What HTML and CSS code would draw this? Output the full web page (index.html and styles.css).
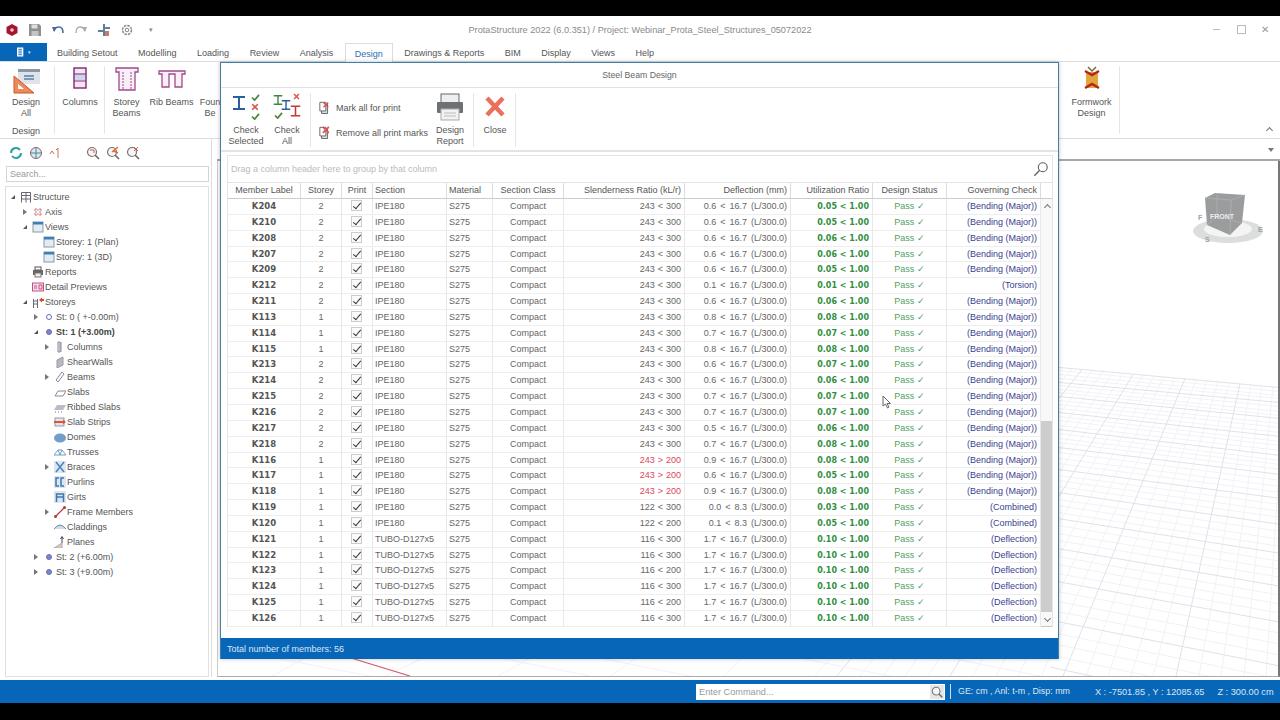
FILE: index.html
```html
<!DOCTYPE html>
<html lang="en">
<head>
    <meta charset="UTF-8">
    <title>ProtaStructure 2022</title>
    <link rel="stylesheet" href="styles.css">
</head>
<body>
<svg class="sprite">
    <symbol id="i-grid" viewBox="0 0 12 12"><path d="M1.500 1.500h9v3h-9zM1.500 4.500v7M6 1.500v10M10.500 4.500v7M1.500 8h9" fill="none" stroke="#667"/></symbol>
    <symbol id="i-axis" viewBox="0 0 12 12"><path d="M2 4h8M2 8h8M4 2v8M8 2v8" fill="none" stroke="#c77" stroke-dasharray="2 1"/></symbol>
    <symbol id="i-view" viewBox="0 0 12 12"><rect x="1" y="1" width="10" height="10" fill="#e4ebf3" stroke="#89a"/><rect x="1" y="1" width="10" height="2.500" fill="#3b7fb8"/></symbol>
    <symbol id="i-print" viewBox="0 0 12 12"><rect x="3" y="1" width="6" height="3" fill="#fff" stroke="#555"/><rect x="1" y="4" width="10" height="5" fill="#666"/><rect x="3" y="7" width="6" height="4" fill="#eee" stroke="#777"/></symbol>
    <symbol id="i-detail" viewBox="0 0 12 12"><rect x="0.500" y="2" width="11" height="8" fill="#f7dce8" stroke="#c2528a"/><path d="M2 5h3M2 7h3M7 4h3v4H7z" fill="none" stroke="#c2528a"/></symbol>
    <symbol id="i-storeys" viewBox="0 0 12 12"><path d="M1.500 3v9M5.500 3v9M1.500 5h4M1.500 8h4" fill="none" stroke="#667"/><path d="M7 4l3-2.500v1.500h2v2h-2v1.500z" fill="#d9492e"/></symbol>
    <symbol id="i-column" viewBox="0 0 12 12"><path d="M4 1h2v10H4zM7 1v10" fill="#eee" stroke="#889"/></symbol>
    <symbol id="i-wall" viewBox="0 0 12 12"><path d="M3 4l6-3v8l-6 3z" fill="#b6b9c2" stroke="#99a"/></symbol>
    <symbol id="i-beam" viewBox="0 0 12 12"><path d="M2 9l6-8 2 2-6 8z" fill="#fff" stroke="#889"/></symbol>
    <symbol id="i-slab" viewBox="0 0 12 12"><path d="M1 10l3-5h8l-3 5z" fill="#fff" stroke="#889"/></symbol>
    <symbol id="i-ribbed" viewBox="0 0 12 12"><path d="M0 9l3-5h9l-3 5z" fill="#b9bcc4"/><path d="M1 11h1M4 11h1M7 11h1" stroke="#778"/></symbol>
    <symbol id="i-strip" viewBox="0 0 12 12"><rect x="1" y="2" width="9" height="8" fill="#dfe4ef" stroke="#99a"/><path d="M0 6h10" stroke="#e2562f" stroke-width="2"/><path d="M9 3.500l3 2.500-3 2.500z" fill="#e2562f"/></symbol>
    <symbol id="i-dome" viewBox="0 0 12 12"><ellipse cx="6" cy="7" rx="6" ry="4.500" fill="#6f9fc8"/></symbol>
    <symbol id="i-truss" viewBox="0 0 12 12"><path d="M0 9h12L8 4H4zM4 4l2 5 2-5" fill="none" stroke="#6f9fc8"/></symbol>
    <symbol id="i-brace" viewBox="0 0 12 12"><rect width="12" height="12" fill="#dbe6f2"/><path d="M2 1l8 10M10 1L2 11" stroke="#4a83b8" stroke-width="1.500"/></symbol>
    <symbol id="i-purlin" viewBox="0 0 12 12"><rect width="12" height="12" fill="#dbe6f2"/><path d="M5 2H2v8h3M10 2H7v8h3" fill="none" stroke="#3f78ad" stroke-width="1.500"/></symbol>
    <symbol id="i-girt" viewBox="0 0 12 12"><rect width="12" height="12" fill="#dbe6f2"/><path d="M2.500 11V3h7v8M2.500 6h7" fill="none" stroke="#3f78ad" stroke-width="1.500"/></symbol>
    <symbol id="i-frame" viewBox="0 0 12 12"><path d="M1.500 10.500l9-9" stroke="#b8323f" stroke-width="1.200"/><circle cx="1.500" cy="10.500" r="1.500" fill="#b8323f"/><circle cx="10.500" cy="1.500" r="1.500" fill="#b8323f"/></symbol>
    <symbol id="i-clad" viewBox="0 0 12 12"><path d="M0 8q6-8 12 0" fill="#cfdbe6" stroke="#6f8fae"/></symbol>
    <symbol id="i-plane" viewBox="0 0 12 12"><path d="M0 12l8-5v5z" fill="#e8c9bb" stroke="#aaa"/><path d="M8 7V1M6.500 3L8 .5 9.500 3" fill="none" stroke="#445"/></symbol>
    <symbol id="i-ibeam" viewBox="0 0 14 16"><path d="M1 1h12v2H8v10h5v2H1v-2h5V3H1z"/></symbol>
    <symbol id="i-tick" viewBox="0 0 10 8"><path d="M1 4l3 3 5-6" fill="none" stroke="#4f8a3c" stroke-width="2"/></symbol>
    <symbol id="i-cross" viewBox="0 0 10 10"><path d="M1.500 1.500l7 7M8.500 1.500l-7 7" fill="none" stroke="#d9534f" stroke-width="2"/></symbol>
    <symbol id="i-doc" viewBox="0 0 14 16"><path d="M3 4h7v11H3z" fill="#ddd" stroke="#555"/><path d="M1 2h7v10H1z" fill="#fff" stroke="#555"/></symbol>
    <symbol id="i-zoom" viewBox="0 0 14 14"><circle cx="6" cy="6" r="4.500" fill="#f6f6f6" stroke="#777" stroke-width="1.200"/><path d="M9 9l4 4" stroke="#666" stroke-width="1.600"/></symbol>
</svg>

<div class="app">
    <div class="titlebar">
        <div class="quick">
            <svg class="q-icon" viewBox="0 0 14 14"><path d="M7 1l5.500 3v6L7 13l-5.500-3V4z" fill="#a3162f"/><circle cx="7" cy="7" r="1.800" fill="#f3c7cf"/></svg>
            <svg class="q-icon" viewBox="0 0 14 14"><path d="M1 1h10l2 2v10H1z" fill="#8f8f8f"/><rect x="3.500" y="1.500" width="6" height="4" fill="#ddd"/><rect x="3.500" y="8" width="7" height="5" fill="#c4c4c4"/></svg>
            <svg class="q-icon" viewBox="0 0 14 14"><path d="M3 8q1-4 5-4t4 6" fill="none" stroke="#456e9c" stroke-width="1.600"/><path d="M1 4l5 0-3 5z" fill="#456e9c"/></svg>
            <svg class="q-icon" viewBox="0 0 14 14"><path d="M11 8q-1-4-5-4t-4 6" fill="none" stroke="#aaa" stroke-width="1.300"/><path d="M13 4H8l3 5z" fill="#aaa"/></svg>
            <svg class="q-icon" viewBox="0 0 14 14"><path d="M6 1h2v3h5v2H8v7H6V9H1V7h5z" fill="#5d7f9c"/><path d="M8 8h4v5H8z" fill="#c87a6b"/></svg>
            <svg class="q-icon" viewBox="0 0 14 14"><circle cx="7" cy="7" r="4.500" fill="none" stroke="#888" stroke-width="1.500" stroke-dasharray="2.500 1"/><circle cx="7" cy="7" r="1.800" fill="none" stroke="#888"/></svg>
            <span class="q-more">▾</span>
        </div>
        <div class="app-title">ProtaStructure 2022 (6.0.351) / Project: Webinar_Prota_Steel_Structures_05072022</div>
        <div class="win-btns">
            <span class="win-min"></span>
            <span class="win-max"></span>
            <span class="win-close">✕</span>
        </div>
    </div>

    <div class="tabs">
        <div class="file-tab">
            <svg viewBox="0 0 10 10" class="file-icon"><path d="M0 0h7v10H0z" fill="#fff"/><path d="M1.500 2h4M1.500 4h4M1.500 6h4M1.500 8h4" stroke="#0866b8"/></svg>
            <span class="file-caret">▾</span>
        </div>
        <span class="tab">Building Setout</span>
        <span class="tab">Modelling</span>
        <span class="tab">Loading</span>
        <span class="tab">Review</span>
        <span class="tab">Analysis</span>
        <span class="tab active">Design</span>
        <span class="tab">Drawings &amp; Reports</span>
        <span class="tab">BIM</span>
        <span class="tab">Display</span>
        <span class="tab">Views</span>
        <span class="tab">Help</span>
    </div>

    <div class="ribbon">
        <div class="r-group design-all">
            <svg class="r-icon" viewBox="0 0 28 28"><rect x="6" y="3" width="22" height="15" fill="#dfe2e6"/><rect x="6" y="3" width="22" height="3" fill="#8b97a3"/><path d="M12 10h10M12 13h10" stroke="#5b7fa6" stroke-width="1.500"/><path d="M2 10v17h20z" fill="#ee8a5a" stroke="#c9562a"/><path d="M6 18v5h6z" fill="#fff"/></svg>
            <span class="r-label">Design<br>All</span>
            <span class="r-caption">Design</span>
        </div>
        <div class="r-group columns">
            <svg class="r-icon" viewBox="0 0 28 28"><rect x="8" y="2" width="12" height="20" fill="#f1e6f2" stroke="#8a2f7f" stroke-width="1.500"/><rect x="9" y="7" width="10" height="7" fill="#cdd4ec"/><path d="M8 8h12M8 15h12" stroke="#8a2f7f"/></svg>
            <span class="r-label">Columns</span>
        </div>
        <div class="r-group storey">
            <svg class="r-icon" viewBox="0 0 28 28"><path d="M3 2h22v4h-3v18H6V6H3z" fill="#f7eef6" stroke="#a04a8c" stroke-width="1.300"/><path d="M10 6v18M18 6v18" stroke="#a04a8c" stroke-dasharray="2 1"/></svg>
            <span class="r-label">Storey<br>Beams</span>
        </div>
        <div class="r-group rib">
            <svg class="r-icon" viewBox="0 0 28 28"><path d="M1 5h26v3h-3v13h-7V8h-6v13H4V8H1z" fill="#f7eef6" stroke="#a04a8c" stroke-width="1.300"/></svg>
            <span class="r-label">Rib Beams</span>
        </div>
        <div class="r-group found">
            <span class="r-label">Foun<br>Be</span>
        </div>
        <div class="r-group formwork">
            <svg class="r-icon" viewBox="0 0 28 28"><path d="M8 6h12v16H8z" fill="#e2a63a"/><path d="M7 5l7 4 7-4M7 22l7-4 7 4" fill="none" stroke="#b3261e" stroke-width="2.500"/><path d="M10 1l4 4 4-4" fill="none" stroke="#7a6a3a" stroke-width="1.500"/></svg>
            <span class="r-label">Formwork<br>Design</span>
        </div>
        <span class="r-collapse"></span>
    </div>

    <div class="work">
        <aside class="side">
            <div class="side-tools">
                <svg class="t-icon" viewBox="0 0 14 14"><path d="M2 7a5 5 0 0 1 9-3M12 7a5 5 0 0 1-9 3" fill="none" stroke="#2ba1a8" stroke-width="2"/></svg>
                <svg class="t-icon" viewBox="0 0 14 14"><circle cx="7" cy="7" r="5.500" fill="#d7e8ee" stroke="#a05b6f"/><path d="M1.500 7h11M7 1.500v11" stroke="#4a8a9c"/></svg>
                <svg class="t-icon" viewBox="0 0 14 14"><path d="M1 8l2-3 2 3M9 2v10M7 4l2-2" fill="none" stroke="#c9725a"/></svg>
                <span class="t-gap"></span>
                <svg class="t-icon" viewBox="0 0 14 14"><use href="#i-zoom"/><path d="M4 4h4v3" fill="none" stroke="#d9534f"/></svg>
                <svg class="t-icon" viewBox="0 0 14 14"><use href="#i-zoom"/><path d="M6 6l6-5M8 5l4 2" fill="none" stroke="#e2682f" stroke-width="1.500"/></svg>
                <svg class="t-icon" viewBox="0 0 14 14"><use href="#i-zoom"/><path d="M8 1l4 4M12 1L8 5" fill="none" stroke="#d9534f"/></svg>
            </div>
            <div class="search">Search...</div>
            <div class="tree">
                <div class="node l0"><i class="caret open"></i><svg class="ico"><use href="#i-grid"/></svg>Structure</div>
                <div class="node l1"><i class="caret"></i><svg class="ico"><use href="#i-axis"/></svg>Axis</div>
                <div class="node l1"><i class="caret open"></i><svg class="ico"><use href="#i-view"/></svg>Views</div>
                <div class="node l2"><i></i><svg class="ico"><use href="#i-view"/></svg>Storey: 1 (Plan)</div>
                <div class="node l2"><i></i><svg class="ico"><use href="#i-view"/></svg>Storey: 1 (3D)</div>
                <div class="node l1"><i></i><svg class="ico"><use href="#i-print"/></svg>Reports</div>
                <div class="node l1"><i></i><svg class="ico"><use href="#i-detail"/></svg>Detail Previews</div>
                <div class="node l1"><i class="caret open"></i><svg class="ico"><use href="#i-storeys"/></svg>Storeys</div>
                <div class="node l2"><i class="caret"></i><b class="dot hollow"></b>St: 0 ( +-0.00m)</div>
                <div class="node l2 bold"><i class="caret open"></i><b class="dot"></b>St: 1 (+3.00m)</div>
                <div class="node l3"><i class="caret"></i><svg class="ico"><use href="#i-column"/></svg>Columns</div>
                <div class="node l3"><i></i><svg class="ico"><use href="#i-wall"/></svg>ShearWalls</div>
                <div class="node l3"><i class="caret"></i><svg class="ico"><use href="#i-beam"/></svg>Beams</div>
                <div class="node l3"><i></i><svg class="ico"><use href="#i-slab"/></svg>Slabs</div>
                <div class="node l3"><i></i><svg class="ico"><use href="#i-ribbed"/></svg>Ribbed Slabs</div>
                <div class="node l3"><i></i><svg class="ico"><use href="#i-strip"/></svg>Slab Strips</div>
                <div class="node l3"><i></i><svg class="ico"><use href="#i-dome"/></svg>Domes</div>
                <div class="node l3"><i></i><svg class="ico"><use href="#i-truss"/></svg>Trusses</div>
                <div class="node l3"><i class="caret"></i><svg class="ico"><use href="#i-brace"/></svg>Braces</div>
                <div class="node l3"><i></i><svg class="ico"><use href="#i-purlin"/></svg>Purlins</div>
                <div class="node l3"><i></i><svg class="ico"><use href="#i-girt"/></svg>Girts</div>
                <div class="node l3"><i class="caret"></i><svg class="ico"><use href="#i-frame"/></svg>Frame Members</div>
                <div class="node l3"><i></i><svg class="ico"><use href="#i-clad"/></svg>Claddings</div>
                <div class="node l3"><i></i><svg class="ico"><use href="#i-plane"/></svg>Planes</div>
                <div class="node l2"><i class="caret"></i><b class="dot"></b>St: 2 (+6.00m)</div>
                <div class="node l2"><i class="caret"></i><b class="dot"></b>St: 3 (+9.00m)</div>
            </div>
        </aside>
        <main class="view">
            <div class="view-strip"><span class="view-arrow"></span></div>
            <div class="canvas">
                <!-- viewBox uses screen coordinates so the floor lines are easy to read off -->
                <svg class="floor" viewBox="218 161 1060 516" preserveAspectRatio="none">
                    <path class="floor-minor" d="M1050 370L1280 392M1050 374L1280 396M1050 378L1280 399M1050 385L1280 407M1050 389L1280 412M1050 392L1280 416M1050 400L1280 424M1050 404L1280 428M1050 408L1280 433M1050 416L1280 442M1050 420L1280 446M1050 425L1280 451M1050 433L1280 461M1050 438L1280 465M1050 442L1280 470M1050 452L1280 481M1050 458L1280 487M1050 463L1280 493M1050 475L1280 505M1050 480L1280 512M1050 486L1280 518M1050 499L1280 532M1050 505L1280 540M1050 512L1280 547M1050 525L1280 562M1050 533L1280 570M1050 540L1280 578M1050 556L1280 596M1050 564L1280 605M1050 573L1280 614M1050 591L1280 634M1050 601L1280 645M1050 611L1280 656M1050 633L1280 680M1050 644L1280 692M1050 656L1280 705"/>
                    <path class="floor-minor" d="M1072 369L815 677M1092 371L860 677M1103 372L883 677M1113 373L905 677M1123 374L928 677M1143 375L973 677M1154 376L996 677M1164 377L1018 677M1175 378L1041 677M1196 380L1086 677M1207 381L1108 677M1218 382L1131 677M1229 383L1153 677M1251 385L1199 677M1262 386L1221 677M1273 387L1244 677M1284 388L1266 677"/>
                    <path class="floor-major" d="M1050 367L1280 388M1050 382L1280 403M1050 396L1280 419M1050 412L1280 437M1050 429L1280 456M1050 447L1280 475M1050 469L1280 499M1050 492L1280 525M1050 518L1280 554M1050 548L1280 587M1050 581L1280 623M1050 621L1280 667M1050 668L1280 718"/>
                    <path class="floor-major" d="M1082 370L837 677M1133 375L950 677M1185 379L1063 677M1240 384L1176 677M1295 389L1289 677"/>
                    <path class="floor-minor" d="M742 659L724 677M636 659L611 677M530 659L498 677M423 659L385 677M305 659L272 677M500 659L590 677M280 660L370 677M600 659L690 677M800 659L890 677M950 659L1040 677"/>
                    <path class="floor-red" d="M351 659L410 677"/>
                </svg>
                <svg class="cube" viewBox="1190 185 80 60">
                    <ellipse cx="1228" cy="231" rx="35" ry="12" fill="#dcdddd"/>
                    <ellipse cx="1228" cy="229" rx="24" ry="8" fill="#f4f4f4"/>
                    <path d="M1205 198l10-5 30 2-3 28-12 12-23-10z" fill="#9a9c9e"/>
                    <path d="M1205 198l26 2 14-5M1231 200l-1 35M1207 225l10-9 25 7M1217 193l0 23" fill="none" stroke="#b4b5b6" stroke-width="0.700"/>
                    <text x="1210" y="219" class="cube-front">FRONT</text>
                    <text x="1198" y="220" class="cube-side">F</text>
                    <text x="1258" y="232" class="cube-side">E</text>
                    <text x="1205" y="242" class="cube-side">S</text>
                </svg>
            </div>
        </main>
    </div>

    <div class="statusbar">
        <div class="command"><span>Enter Command...</span><svg viewBox="0 0 14 14"><use href="#i-zoom"/></svg></div>
        <span class="units">GE: cm , Anl: t-m , Disp: mm</span>
        <span class="coords">X : -7501.85 , Y : 12085.65</span>
        <span class="zval">Z : 300.00 cm</span>
    </div>

    <section class="dialog">
        <div class="dlg-title">Steel Beam Design</div>
        <div class="dlg-tools">
            <div class="d-btn check-sel">
                <svg class="d-icon" viewBox="0 0 30 28"><use href="#i-ibeam" x="1" y="2" width="14" height="16" fill="#2c5f9e"/><use href="#i-tick" x="20" y="1" width="9" height="7"/><use href="#i-cross" x="20" y="10" width="8" height="8"/><use href="#i-tick" x="20" y="20" width="9" height="7"/></svg>
                <span>Check<br>Selected</span>
            </div>
            <div class="d-btn check-all">
                <svg class="d-icon" viewBox="0 0 30 28"><use href="#i-ibeam" x="1" y="1" width="10" height="12" fill="#3a8a4a"/><use href="#i-ibeam" x="9" y="6" width="10" height="12" fill="#2c5f9e"/><use href="#i-ibeam" x="18" y="11" width="11" height="14" fill="#c1392f"/><use href="#i-cross" x="21" y="0" width="7" height="7"/><use href="#i-tick" x="2" y="19" width="9" height="7"/></svg>
                <span>Check<br>All</span>
            </div>
            <div class="d-sep"></div>
            <div class="d-marks">
                <div class="d-mark"><svg viewBox="0 0 14 16"><use href="#i-doc"/><use href="#i-cross" x="4" y="1" width="8" height="8"/></svg>Mark all for print</div>
                <div class="d-mark"><svg viewBox="0 0 14 16"><use href="#i-doc"/><use href="#i-cross" x="3" y="0" width="10" height="10"/></svg>Remove all print marks</div>
            </div>
            <div class="d-btn report">
                <svg class="d-icon" viewBox="0 0 30 28"><rect x="6" y="1" width="18" height="9" fill="#eee" stroke="#666"/><rect x="2" y="9" width="26" height="11" rx="1" fill="#6d7174"/><rect x="6" y="16" width="18" height="11" fill="#f2f2f2" stroke="#aaa"/><path d="M9 20h12M9 23h12" stroke="#bbb"/></svg>
                <span>Design<br>Report</span>
            </div>
            <div class="d-sep"></div>
            <div class="d-btn close">
                <svg class="d-icon" viewBox="0 0 30 28"><path d="M7 5l16 17M23 5L7 22" stroke="#ec6f5d" stroke-width="4.500"/></svg>
                <span>Close</span>
            </div>
            <div class="d-sep"></div>
        </div>

        <div class="gridbox">
            <div class="grouppanel">
                <span>Drag a column header here to group by that column</span>
                <svg viewBox="0 0 18 18"><circle cx="11" cy="7" r="5" fill="none" stroke="#666" stroke-width="1.300"/><path d="M7.500 10.500L1.500 16.500" stroke="#666" stroke-width="1.600"/></svg>
            </div>
            <div class="gridhead">
                <span>Member Label</span><span>Storey</span><span>Print</span><span>Section</span><span>Material</span><span>Section Class</span><span>Slenderness Ratio (kL/r)</span><span>Deflection (mm)</span><span>Utilization Ratio</span><span>Design Status</span><span>Governing Check</span>
            </div>
            <div class="gridbody">
                <div class="rows">
                    <div class="row"><span>K204</span><span>2</span><span><i class="check"></i></span><span>IPE180</span><span>S275</span><span>Compact</span><span>243 &lt; 300</span><span>0.6 &lt; 16.7 (L/300.0)</span><span>0.05 &lt; 1.00</span><span>Pass ✓</span><span>(Bending (Major))</span></div>
                    <div class="row"><span>K210</span><span>2</span><span><i class="check"></i></span><span>IPE180</span><span>S275</span><span>Compact</span><span>243 &lt; 300</span><span>0.6 &lt; 16.7 (L/300.0)</span><span>0.05 &lt; 1.00</span><span>Pass ✓</span><span>(Bending (Major))</span></div>
                    <div class="row"><span>K208</span><span>2</span><span><i class="check"></i></span><span>IPE180</span><span>S275</span><span>Compact</span><span>243 &lt; 300</span><span>0.6 &lt; 16.7 (L/300.0)</span><span>0.06 &lt; 1.00</span><span>Pass ✓</span><span>(Bending (Major))</span></div>
                    <div class="row"><span>K207</span><span>2</span><span><i class="check"></i></span><span>IPE180</span><span>S275</span><span>Compact</span><span>243 &lt; 300</span><span>0.6 &lt; 16.7 (L/300.0)</span><span>0.06 &lt; 1.00</span><span>Pass ✓</span><span>(Bending (Major))</span></div>
                    <div class="row"><span>K209</span><span>2</span><span><i class="check"></i></span><span>IPE180</span><span>S275</span><span>Compact</span><span>243 &lt; 300</span><span>0.6 &lt; 16.7 (L/300.0)</span><span>0.05 &lt; 1.00</span><span>Pass ✓</span><span>(Bending (Major))</span></div>
                    <div class="row"><span>K212</span><span>2</span><span><i class="check"></i></span><span>IPE180</span><span>S275</span><span>Compact</span><span>243 &lt; 300</span><span>0.1 &lt; 16.7 (L/300.0)</span><span>0.01 &lt; 1.00</span><span>Pass ✓</span><span>(Torsion)</span></div>
                    <div class="row"><span>K211</span><span>2</span><span><i class="check"></i></span><span>IPE180</span><span>S275</span><span>Compact</span><span>243 &lt; 300</span><span>0.6 &lt; 16.7 (L/300.0)</span><span>0.06 &lt; 1.00</span><span>Pass ✓</span><span>(Bending (Major))</span></div>
                    <div class="row"><span>K113</span><span>1</span><span><i class="check"></i></span><span>IPE180</span><span>S275</span><span>Compact</span><span>243 &lt; 300</span><span>0.8 &lt; 16.7 (L/300.0)</span><span>0.08 &lt; 1.00</span><span>Pass ✓</span><span>(Bending (Major))</span></div>
                    <div class="row"><span>K114</span><span>1</span><span><i class="check"></i></span><span>IPE180</span><span>S275</span><span>Compact</span><span>243 &lt; 300</span><span>0.7 &lt; 16.7 (L/300.0)</span><span>0.07 &lt; 1.00</span><span>Pass ✓</span><span>(Bending (Major))</span></div>
                    <div class="row"><span>K115</span><span>1</span><span><i class="check"></i></span><span>IPE180</span><span>S275</span><span>Compact</span><span>243 &lt; 300</span><span>0.8 &lt; 16.7 (L/300.0)</span><span>0.08 &lt; 1.00</span><span>Pass ✓</span><span>(Bending (Major))</span></div>
                    <div class="row"><span>K213</span><span>2</span><span><i class="check"></i></span><span>IPE180</span><span>S275</span><span>Compact</span><span>243 &lt; 300</span><span>0.6 &lt; 16.7 (L/300.0)</span><span>0.07 &lt; 1.00</span><span>Pass ✓</span><span>(Bending (Major))</span></div>
                    <div class="row"><span>K214</span><span>2</span><span><i class="check"></i></span><span>IPE180</span><span>S275</span><span>Compact</span><span>243 &lt; 300</span><span>0.6 &lt; 16.7 (L/300.0)</span><span>0.06 &lt; 1.00</span><span>Pass ✓</span><span>(Bending (Major))</span></div>
                    <div class="row"><span>K215</span><span>2</span><span><i class="check"></i></span><span>IPE180</span><span>S275</span><span>Compact</span><span>243 &lt; 300</span><span>0.7 &lt; 16.7 (L/300.0)</span><span>0.07 &lt; 1.00</span><span>Pass ✓</span><span>(Bending (Major))</span></div>
                    <div class="row"><span>K216</span><span>2</span><span><i class="check"></i></span><span>IPE180</span><span>S275</span><span>Compact</span><span>243 &lt; 300</span><span>0.7 &lt; 16.7 (L/300.0)</span><span>0.07 &lt; 1.00</span><span>Pass ✓</span><span>(Bending (Major))</span></div>
                    <div class="row"><span>K217</span><span>2</span><span><i class="check"></i></span><span>IPE180</span><span>S275</span><span>Compact</span><span>243 &lt; 300</span><span>0.5 &lt; 16.7 (L/300.0)</span><span>0.06 &lt; 1.00</span><span>Pass ✓</span><span>(Bending (Major))</span></div>
                    <div class="row"><span>K218</span><span>2</span><span><i class="check"></i></span><span>IPE180</span><span>S275</span><span>Compact</span><span>243 &lt; 300</span><span>0.7 &lt; 16.7 (L/300.0)</span><span>0.08 &lt; 1.00</span><span>Pass ✓</span><span>(Bending (Major))</span></div>
                    <div class="row"><span>K116</span><span>1</span><span><i class="check"></i></span><span>IPE180</span><span>S275</span><span>Compact</span><span class="fail">243 &gt; 200</span><span>0.9 &lt; 16.7 (L/300.0)</span><span>0.08 &lt; 1.00</span><span>Pass ✓</span><span>(Bending (Major))</span></div>
                    <div class="row"><span>K117</span><span>1</span><span><i class="check"></i></span><span>IPE180</span><span>S275</span><span>Compact</span><span class="fail">243 &gt; 200</span><span>0.6 &lt; 16.7 (L/300.0)</span><span>0.05 &lt; 1.00</span><span>Pass ✓</span><span>(Bending (Major))</span></div>
                    <div class="row"><span>K118</span><span>1</span><span><i class="check"></i></span><span>IPE180</span><span>S275</span><span>Compact</span><span class="fail">243 &gt; 200</span><span>0.9 &lt; 16.7 (L/300.0)</span><span>0.08 &lt; 1.00</span><span>Pass ✓</span><span>(Bending (Major))</span></div>
                    <div class="row"><span>K119</span><span>1</span><span><i class="check"></i></span><span>IPE180</span><span>S275</span><span>Compact</span><span>122 &lt; 300</span><span>0.0 &lt; 8.3 (L/300.0)</span><span>0.03 &lt; 1.00</span><span>Pass ✓</span><span>(Combined)</span></div>
                    <div class="row"><span>K120</span><span>1</span><span><i class="check"></i></span><span>IPE180</span><span>S275</span><span>Compact</span><span>122 &lt; 200</span><span>0.1 &lt; 8.3 (L/300.0)</span><span>0.05 &lt; 1.00</span><span>Pass ✓</span><span>(Combined)</span></div>
                    <div class="row"><span>K121</span><span>1</span><span><i class="check"></i></span><span>TUBO-D127x5</span><span>S275</span><span>Compact</span><span>116 &lt; 300</span><span>1.7 &lt; 16.7 (L/300.0)</span><span>0.10 &lt; 1.00</span><span>Pass ✓</span><span>(Deflection)</span></div>
                    <div class="row"><span>K122</span><span>1</span><span><i class="check"></i></span><span>TUBO-D127x5</span><span>S275</span><span>Compact</span><span>116 &lt; 300</span><span>1.7 &lt; 16.7 (L/300.0)</span><span>0.10 &lt; 1.00</span><span>Pass ✓</span><span>(Deflection)</span></div>
                    <div class="row"><span>K123</span><span>1</span><span><i class="check"></i></span><span>TUBO-D127x5</span><span>S275</span><span>Compact</span><span>116 &lt; 200</span><span>1.7 &lt; 16.7 (L/300.0)</span><span>0.10 &lt; 1.00</span><span>Pass ✓</span><span>(Deflection)</span></div>
                    <div class="row"><span>K124</span><span>1</span><span><i class="check"></i></span><span>TUBO-D127x5</span><span>S275</span><span>Compact</span><span>116 &lt; 300</span><span>1.7 &lt; 16.7 (L/300.0)</span><span>0.10 &lt; 1.00</span><span>Pass ✓</span><span>(Deflection)</span></div>
                    <div class="row"><span>K125</span><span>1</span><span><i class="check"></i></span><span>TUBO-D127x5</span><span>S275</span><span>Compact</span><span>116 &lt; 200</span><span>1.7 &lt; 16.7 (L/300.0)</span><span>0.10 &lt; 1.00</span><span>Pass ✓</span><span>(Deflection)</span></div>
                    <div class="row"><span>K126</span><span>1</span><span><i class="check"></i></span><span>TUBO-D127x5</span><span>S275</span><span>Compact</span><span>116 &lt; 300</span><span>1.7 &lt; 16.7 (L/300.0)</span><span>0.10 &lt; 1.00</span><span>Pass ✓</span><span>(Deflection)</span></div>
                </div>
                <div class="scroll">
                    <span class="scroll-up"></span>
                    <span class="scroll-thumb"></span>
                    <span class="scroll-down"></span>
                </div>
            </div>
        </div>

        <div class="dlg-foot">
            <span>Total number of members: 56</span>
            <i class="grip"></i>
        </div>
    </section>

    <svg class="pointer" viewBox="0 0 10 14"><path d="M1 1v10l2.500-2 2 4 1.500-1-2-3.500h3.500z" fill="#fff" stroke="#666"/></svg>
</div>
</body>
</html>
```

FILE: styles.css
```css
* {
    box-sizing: border-box;
}

html, body {
    margin: 0;
    padding: 0;
}

body {
    width: 1280px;
    height: 720px;
    overflow: hidden;
    background-color: #000;
    font-family: "Liberation Sans", Arial, sans-serif;
    font-size: 9px;
    color: #555;
}

.sprite {
    display: none;
}

.app {
    position: relative;
    display: flex;
    flex-direction: column;
    width: 1280px;
    height: 687px;
    margin-top: 16px;
    background-color: #fff;
}

/* title bar */
.titlebar {
    display: grid;
    grid-template-columns: 1fr auto 1fr;
    align-items: center;
    height: 27px;
    padding: 0 11px 0 5px;
}

.quick {
    display: flex;
    align-items: center;
    gap: 9px;
}

.q-icon {
    width: 14px;
    height: 14px;
}

.q-more {
    margin-left: 6px;
    font-size: 7px;
    color: #888;
}

.app-title {
    padding-left: 6px;
    text-align: center;
    font-size: 9.2px;
    color: #8a8a8a;
}

.win-btns {
    display: flex;
    justify-content: flex-end;
    align-items: center;
    gap: 15px;
    font-size: 10px;
    color: #aaa;
}

.win-min {
    width: 7px;
    height: 1px;
    margin-right: 2px;
    background-color: #bbb;
}

.win-max {
    width: 9px;
    height: 9px;
    border: 1px solid #bbb;
}

.win-close {
    color: #999;
}

/* tabs */
.tabs {
    display: flex;
    align-items: stretch;
    height: 19px;
    border-bottom: 1px solid #ddd;
}

.file-tab {
    display: flex;
    align-items: center;
    justify-content: center;
    gap: 2px;
    width: 47px;
    margin-right: 4px;
    background-color: #0866b8;
}

.file-icon {
    width: 9px;
    height: 10px;
}

.file-caret {
    font-size: 5px;
    color: #dce9f5;
}

.tab {
    display: flex;
    align-items: center;
    padding: 2px 6px 0;
    margin-right: 8.5px;
    font-size: 9px;
    color: #555;
}

.tab.active {
    margin: 0 5.5px -1px -3px;
    padding: 2px 9px 0;
    color: #2a6fb5;
    background-color: #fff;
    border: 1px solid #ddd;
    border-bottom: none;
}

/* ribbon */
.ribbon {
    position: relative;
    display: flex;
    height: 77px;
    border-bottom: 1px solid #ddd;
    padding-top: 4px;
}

.r-group {
    display: flex;
    flex-direction: column;
    align-items: center;
    flex: none;
    height: 68px;
    text-align: center;
    line-height: 11px;
    font-size: 9px;
    color: #555;
    white-space: nowrap;
}

.r-icon {
    flex: none;
    width: 28px;
    height: 28px;
    margin-bottom: 3px;
}

.r-caption {
    margin-top: 7px;
}

.design-all {
    width: 55px;
    padding-right: 2px;
    border-right: 1px solid #e6e6e6;
}

.columns {
    width: 50px;
    padding-left: 1px;
    border-right: 1px solid #e6e6e6;
}

.storey {
    width: 43px;
}

.rib {
    width: 47px;
}

.found {
    width: 30px;
    padding-top: 31px;
}

.formwork {
    width: 58px;
    margin-left: auto;
    margin-right: 160px;
    padding-left: 2px;
    border-right: 1px solid #e6e6e6;
}

.r-collapse {
    position: absolute;
    right: 8px;
    bottom: 5px;
    width: 5px;
    height: 5px;
    border-top: 1px solid #777;
    border-left: 1px solid #777;
    transform: rotate(45deg);
}

/* work area */
.work {
    display: flex;
    flex: 1;
    min-height: 0;
}

.side {
    display: flex;
    flex-direction: column;
    width: 212px;
    padding: 3px 2px 0 6px;
    border-right: 1px solid #ddd;
}

.side-tools {
    display: flex;
    align-items: center;
    gap: 6px;
    height: 21px;
    padding-left: 3px;
}

.t-icon {
    width: 14px;
    height: 14px;
}

.t-gap {
    width: 11px;
}

.search {
    height: 16px;
    margin-top: 3px;
    padding: 2px 3px;
    border: 1px solid #d4d4d4;
    font-size: 9px;
    color: #999;
}

.tree {
    flex: 1;
    margin-top: 4px;
    margin-left: -1px;
    padding-top: 2px;
    border: 1px solid #e0e0e0;
}

.node {
    display: flex;
    align-items: center;
    height: 15px;
    font-size: 9px;
    color: #555;
    white-space: nowrap;
}

.node i {
    flex: none;
    width: 10px;
}

.node .ico {
    flex: none;
    width: 12px;
    height: 12px;
    margin-right: 1px;
}

.l0 {
    padding-left: 4px;
}

.l1 {
    padding-left: 16px;
}

.l2 {
    padding-left: 27px;
}

.l3 {
    padding-left: 38px;
}

.caret {
    position: relative;
    height: 6px;
}

.caret::before {
    content: "";
    position: absolute;
    left: 1px;
    top: 0;
    border-left: 4px solid #777;
    border-top: 3px solid transparent;
    border-bottom: 3px solid transparent;
}

.caret.open::before {
    top: 1px;
    border-left: 4px solid transparent;
    border-top: none;
    border-bottom: 4px solid #555;
}

.dot {
    flex: none;
    width: 6px;
    height: 6px;
    margin: 0 4px 0 3px;
    border-radius: 50%;
    background-color: #7c86cf;
    border: 1px solid #6670b8;
}

.dot.hollow {
    background-color: #fff;
}

.node.bold {
    font-weight: 700;
    color: #444;
}

/* viewport */
.view {
    display: flex;
    flex-direction: column;
    flex: 1;
    margin-left: 5px;
    min-width: 0;
}

.view-strip {
    position: relative;
    height: 22px;
    flex: none;
    border-bottom: 2px solid #a8a8a8;
}

.view-arrow {
    position: absolute;
    right: 6px;
    top: 9px;
    border-top: 4px solid #777;
    border-left: 3px solid transparent;
    border-right: 3px solid transparent;
}

.canvas {
    position: relative;
    flex: 1;
    border-left: 1px solid #ccc;
    border-right: 2px solid #777;
    border-bottom: 1px solid #aaa;
    overflow: hidden;
}

.floor {
    position: absolute;
    left: 0;
    top: 0;
    width: 100%;
    height: 100%;
}

.floor-minor {
    fill: none;
    stroke: #f1f2f6;
}

.floor-major {
    fill: none;
    stroke: #e0e2ea;
}

.floor-red {
    fill: none;
    stroke: #d45a66;
    stroke-width: 1.2;
}

.cube {
    position: absolute;
    left: 972px;
    top: 24px;
    width: 80px;
    height: 60px;
}

.cube-front {
    font-size: 7px;
    font-weight: 700;
    fill: #ececec;
}

.cube-side {
    font-size: 7px;
    font-weight: 700;
    fill: #a0a0a0;
}

/* status bar */
.statusbar {
    display: flex;
    align-items: center;
    flex: none;
    height: 23px;
    margin-top: 3px;
    padding-left: 696px;
    background-color: #0866b8;
    color: #d8e8f6;
    font-size: 9.2px;
    white-space: nowrap;
}

.command {
    display: flex;
    justify-content: space-between;
    align-items: center;
    width: 249px;
    height: 16px;
    padding: 0 1px 0 3px;
    background-color: #fff;
    color: #999;
}

.command svg {
    width: 14px;
    height: 14px;
    padding: 1px;
    background-color: #e6e6e6;
}

.units {
    margin-left: 5px;
    padding-left: 7px;
    border-left: 1px solid #cfe0f0;
    font-size: 8.9px;
    line-height: 15px;
}

.coords {
    margin-left: 25px;
}

.zval {
    margin-left: 13px;
}

/* dialog */
.dialog {
    position: absolute;
    left: 220px;
    top: 46px;
    display: flex;
    flex-direction: column;
    width: 839px;
    height: 597px;
    background-color: #fff;
    border: 1px solid #3f7fa8;
    border-bottom: none;
    box-shadow: 0 0 4px rgba(0, 0, 0, 0.25);
}

.dlg-title {
    flex: none;
    height: 25px;
    border-bottom: 1px solid #e2e2e2;
    text-align: center;
    line-height: 25px;
    font-size: 8.7px;
    color: #666;
}

.dlg-tools {
    display: flex;
    flex: none;
    height: 64px;
    padding-top: 5px;
    border-bottom: 2px solid #e4e4e4;
}

.d-btn {
    display: flex;
    flex-direction: column;
    align-items: center;
    flex: none;
    text-align: center;
    line-height: 11px;
    font-size: 9px;
    color: #555;
}

.d-icon {
    flex: none;
    width: 30px;
    height: 28px;
    margin-bottom: 4px;
}

.check-sel {
    width: 50px;
}

.check-all {
    width: 32px;
}

.d-sep {
    flex: none;
    width: 1px;
    height: 54px;
    margin: 0 8px 0 7px;
    background-color: #e6e6e6;
}

.d-marks {
    display: flex;
    flex-direction: column;
    gap: 8px;
    flex: none;
    width: 115px;
    padding-top: 6px;
}

.d-mark {
    display: flex;
    align-items: center;
    gap: 5px;
    height: 17px;
    white-space: nowrap;
    font-size: 9px;
    color: #555;
}

.d-mark svg {
    flex: none;
    width: 12px;
    height: 15px;
}

.report {
    width: 32px;
}

.close {
    width: 26px;
}

.gridbox {
    display: flex;
    flex-direction: column;
    flex: none;
    height: 472px;
    margin: 3px 5px 0 6px;
    border: 1px solid #e4e4e4;
    border-bottom: 1px solid #c8c8c8;
}

.grouppanel {
    display: flex;
    justify-content: space-between;
    align-items: center;
    flex: none;
    height: 27px;
    padding: 0 3px;
    border-bottom: 1px solid #e4e4e4;
    font-size: 9px;
    color: #bbb;
}

.grouppanel svg {
    width: 16px;
    height: 16px;
}

.gridhead,
.row {
    display: grid;
    grid-template-columns: 73px 41px 31px 74px 46px 71px 121px 106px 82px 74px 94px;
}

.gridhead {
    flex: none;
    height: 16px;
    border-bottom: 1px solid #ccc;
    font-size: 9px;
    color: #555;
    line-height: 14px;
}

.gridhead span {
    border-right: 1px solid #dcdcdc;
    text-align: center;
    white-space: nowrap;
    overflow: hidden;
}

.gridhead span:nth-child(4),
.gridhead span:nth-child(5) {
    text-align: left;
    padding-left: 2px;
}

.gridhead span:nth-child(7),
.gridhead span:nth-child(8),
.gridhead span:nth-child(9),
.gridhead span:nth-child(11) {
    text-align: right;
    padding-right: 3px;
}

.gridbody {
    display: flex;
    flex: 1;
    min-height: 0;
}

.rows {
    flex: none;
    width: 813px;
}

.row {
    height: 15.846px;
    line-height: 15px;
    font-size: 9px;
    color: #666;
}

.row span {
    border-right: 1px solid #e8e8e8;
    border-bottom: 1px solid #eeeeee;
    white-space: nowrap;
    overflow: hidden;
}

.row span:nth-child(1) {
    text-align: center;
    font-family: "DejaVu Sans", sans-serif;
    font-size: 8.5px;
    font-weight: 700;
    line-height: 15px;
    color: #555;
}

.row span:nth-child(2),
.row span:nth-child(6),
.row span:nth-child(10) {
    text-align: center;
}

.row span:nth-child(3) {
    padding-right: 1px;
    line-height: 13px;
    text-align: center;
}

.row span:nth-child(4),
.row span:nth-child(5) {
    padding-left: 2px;
}

.row span:nth-child(7),
.row span:nth-child(8),
.row span:nth-child(9),
.row span:nth-child(11) {
    text-align: right;
    padding-right: 3px;
}

.row span:nth-child(7) {
    word-spacing: 0.5px;
}

.row span:nth-child(8) {
    word-spacing: 1.5px;
}

.row span:nth-child(9) {
    font-family: "DejaVu Sans", sans-serif;
    font-size: 8px;
    font-weight: 700;
    line-height: 15px;
    color: #2f8f3f;
}

.row span:nth-child(10) {
    color: #4f9f62;
}

.row span:nth-child(11) {
    color: #3d3d8f;
}

.row .fail {
    color: #e0455a;
}

.check {
    position: relative;
    display: inline-block;
    width: 11px;
    height: 11px;
    margin-top: 1px;
    background-color: #fafafa;
    border: 1px solid #ccc;
}

.check::after {
    content: "";
    position: absolute;
    left: 3px;
    top: 0;
    width: 3px;
    height: 7px;
    border-right: 1.5px solid #333;
    border-bottom: 1.5px solid #333;
    transform: rotate(40deg);
}

.scroll {
    position: relative;
    flex: 1;
    background-color: #f8f8f8;
}

.scroll-thumb {
    position: absolute;
    left: 0;
    right: 0;
    top: 222px;
    bottom: 14px;
    background-color: #cdcdcd;
}

.scroll-up,
.scroll-down {
    position: absolute;
    left: 4px;
    width: 5px;
    height: 5px;
    border-left: 1px solid #777;
    border-top: 1px solid #777;
}

.scroll-up {
    top: 6px;
    transform: rotate(45deg);
}

.scroll-down {
    bottom: 5px;
    transform: rotate(225deg);
}

.dlg-foot {
    position: relative;
    display: flex;
    align-items: center;
    flex: 1;
    margin-top: 11px;
    padding-left: 6px;
    background-color: #0866b8;
    color: #d8e8f6;
    font-size: 9px;
}

.grip {
    position: absolute;
    right: 2px;
    bottom: 2px;
    width: 6px;
    height: 6px;
    background-image: radial-gradient(#cfe2f3 40%, transparent 45%);
    background-size: 2px 2px;
}

.pointer {
    position: absolute;
    left: 882px;
    top: 379px;
    width: 10px;
    height: 14px;
}
```
